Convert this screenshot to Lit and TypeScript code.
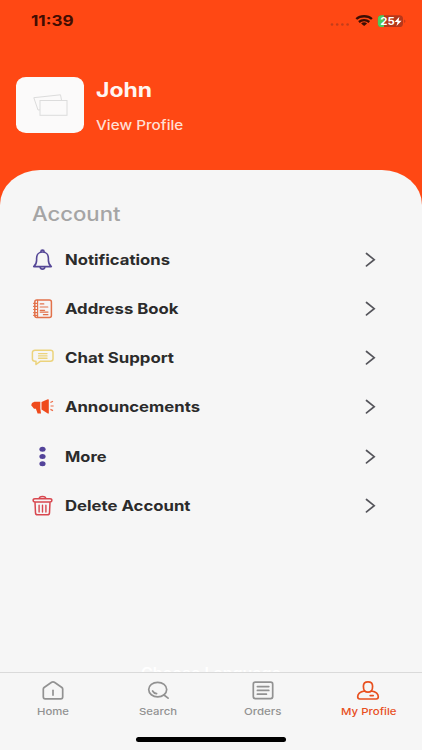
import { LitElement, html, svg, css } from "lit";
import { customElement } from "lit/decorators.js";

const label = (text: string, width: number, cls: string, baseline: number, height: number) => html`
  <svg class="label ${cls}" width=${width} height=${height}>
    <text x="0" y=${baseline} textLength=${width} lengthAdjust="spacingAndGlyphs">${text}</text>
  </svg>`;

const bell = svg`<g fill="none" stroke="#554796" stroke-width="1.6" stroke-linejoin="round" stroke-linecap="round">
  <path d="M2.700 17.600C4.600 16 5.600 14.400 5.600 11.200V9.200C5.600 5.600 8 3 11.500 3s5.900 2.600 5.900 6.200v2c0 3.200 1 4.800 2.900 6.400z"/>
  <path d="M9.900 2.800c0-2.200 3.200-2.200 3.200 0M9.200 18.200c.3 2.600 4.300 2.600 4.600 0"/></g>`;
const book = svg`<g fill="none" stroke="#e2724b" stroke-linecap="round">
  <rect x="3.800" y="2.100" width="16.600" height="17.400" rx="2" stroke-width="1.500"/>
  <path stroke-width="1.200" d="M6.600 2.300v17M2.600 5.300h3.400M2.600 8.400h3.400M2.600 11.500h3.400M2.600 14.600h3.400M2.600 17.300h3M9.200 5.900h3.600M9.200 9h7.600M9.200 12.300h4.400M9.200 14.100h7.800M12.400 16.700h4.500"/></g>`;
const chat = svg`<g fill="none" stroke="#ecd37c" stroke-width="1.500" stroke-linejoin="round" stroke-linecap="round">
  <path d="M4 3.300h15.400a2.600 2.200 0 0 1 2.600 2.200v6.600a2.600 2.200 0 0 1-2.600 2.200H9.200l-4.200 3.200v-3.200H4a2.600 2.200 0 0 1-2.600-2.200V5.500A2.600 2.200 0 0 1 4 3.300z"/>
  <path stroke-width="1.400" d="M7.600 6.600h8.400M7.600 8.900h8.400M7.600 11.200h8.400"/></g>`;
const horn = svg`<g fill="#ef4a1c">
  <path d="M1 7 3.400 5.700h5.900v6.800l.7 5.100H6.600l-1.700-4.900H3L.2 9.200z"/>
  <path d="M10.500 5.900 16.800 3.300c.6-.2 1 .2 1 .7v13c0 .6-.5.9-1 .6l-6.300-4.200z"/>
  <path d="m19.400 6.500 2.600-1.200M19.600 10h3M19.400 13.400l2.600 1.200" fill="none" stroke="#ef6a45" stroke-width="1.200"/></g>`;
const dots = svg`<g fill="#53439a"><ellipse cx="11.500" cy="3.300" rx="3.100" ry="2.500"/><ellipse cx="11.500" cy="10.600" rx="3.100" ry="2.500"/><ellipse cx="11.500" cy="17.800" rx="3.100" ry="2.500"/></g>`;
const trash = svg`<g fill="none" stroke="#d8474f" stroke-linejoin="round" stroke-linecap="round">
  <path stroke-width="1.500" d="M4 3.700h15a1.400 1.200 0 0 1 0 3.200H4a1.400 1.200 0 0 1 0-3.200zM8.300 3.500c0-2.600 6.400-2.600 6.400 0M4 7.200l.5 10.700c.1 1.300.8 1.900 2.100 1.900h9.800c1.300 0 2-.6 2.100-1.900L19 7.200"/>
  <path stroke-width="1.400" d="M8.100 10.200v6.900M11.500 10.200v6.900M14.900 10.200v6.900"/></g>`;

const rows = [
  { text: "Notifications", width: 105, icon: bell },
  { text: "Address Book", width: 113.5, icon: book },
  { text: "Chat Support", width: 109, icon: chat },
  { text: "Announcements", width: 135, icon: horn },
  { text: "More", width: 41.5, icon: dots },
  { text: "Delete Account", width: 125.5, icon: trash },
];

const tabs = [
  { text: "Home", width: 32, icon: svg`<path d="M2.300 9.100c0-.7.2-1.100.8-1.600l7.500-5.200c.9-.6 1.900-.6 2.800 0l7.500 5.200c.6.5.8.9.8 1.600v8c0 1-.8 1.700-1.900 1.700H4.200c-1.100 0-1.900-.7-1.900-1.700z"/><path d="M12 10.300v4.800"/>` },
  { text: "Search", width: 38, icon: svg`<ellipse cx="11.700" cy="9.600" rx="9" ry="7.300"/><path d="m18 15 4.100 3.200M6.600 11c.8 1.500 2.200 2.400 4 2.600"/>` },
  { text: "Orders", width: 37.5, icon: svg`<rect x="2.300" y="2.200" width="19.400" height="16.400" rx="2"/><path d="M6.400 6.600h11.400M6.400 10.400h11.400M6.400 14.200h9"/>` },
  { text: "My Profile", width: 55.5, icon: svg`<path d="M8.600 11C7.700 10 7.400 8 7.400 6.200 7.400 3.600 9.200 1.900 12 1.900s4.600 1.700 4.600 4.300c0 1.800-.3 3.800-1.200 4.800"/><path d="M8.600 11C4.500 11.600 1.700 13.600 1.700 16.800c0 1.500.6 2.200 2.100 2.200h16.400c1.500 0 2.100-.7 2.100-2.200 0-3.200-2.800-5.200-6.900-5.800-1 .9-2 1.200-3.400 1.200S9.600 11.900 8.600 11zM14.200 15.600h3"/>` },
];

@customElement("app-root")
export class AppRoot extends LitElement {
  static styles = css`
    :host {
      display: flex;
      flex-direction: column;
      width: 422px;
      height: 750px;
      overflow: hidden;
      background: #ff4814;
      font-family: Inter, "Liberation Sans", sans-serif;
    }
    svg { display: block; flex: none; overflow: visible; }
    .status {
      display: flex;
      justify-content: space-between;
      height: 32px;
      padding: 11px 17px 0 31px;
      box-sizing: border-box;
    }
    .time { font-size: 14.2px; font-weight: 650; fill: #420d02; }
    .profile { display: flex; gap: 12px; height: 137.5px; padding: 45.3px 0 0 16.3px; box-sizing: border-box; }
    .photo {
      display: grid;
      place-items: center;
      width: 67.8px;
      height: 55.5px;
      border-radius: 10px / 8.5px;
      background: #fbfafa;
    }
    .name { font-size: 19.7px; font-weight: 700; fill: #fff6f1; }
    .view { font-size: 13.2px; font-weight: 450; fill: #ffdfd3; }
    .panel {
      flex: 1;
      min-height: 0;
      display: flex;
      flex-direction: column;
      background: #f6f6f6;
      border-radius: 40px 40px 0 0 / 35px 35px 0 0;
    }
    .content { flex: 1; min-height: 0; display: flex; flex-direction: column; overflow: hidden; padding: 31px 46px 0 31px; }
    .heading { font-size: 19.5px; font-weight: 500; fill: #a5a5a5; margin-left: 0.5px; }
    .list { display: flex; flex-direction: column; padding-top: 10.4px; }
    .row { display: flex; align-items: center; gap: 11px; height: 49.25px; }
    .row .chevron { margin-left: auto; }
    .item { font-size: 14.4px; font-weight: 650; fill: #2b2b2b; }
    .language { font-size: 14.3px; font-weight: 600; fill: #ffffff; margin: auto 0 0 110px; }
    .tabs { display: flex; height: 78px; box-sizing: border-box; padding-right: 1px; border-top: 1px solid #dadada; }
    .tab {
      flex: 1;
      display: flex;
      flex-direction: column;
      align-items: center;
      padding-top: 7px;
      gap: 4px;
      color: #929292;
    }
    .tab.active { color: #e8501f; }
    .tabtext { font-size: 9.6px; font-weight: 500; fill: currentColor; }
    .indicator {
      position: absolute;
      left: 135.5px;
      top: 737.3px;
      width: 150.5px;
      height: 5px;
      border-radius: 3px;
      background: #000;
    }
  `;

  render() {
    return html`
      <div class="status">
        ${label("11:39", 42.5, "time", 15.2, 18)}
        <svg width="76" height="20">
          <g fill="#c23d1a"><circle cx="3" cy="13.500" r="1.300"/><circle cx="8.200" cy="13.500" r="1.300"/><circle cx="13.400" cy="13.500" r="1.300"/><circle cx="18.600" cy="13.500" r="1.300"/></g>
          <g fill="none" stroke="#3b0e04" stroke-width="2.300"><path d="M27.300 8c4-3.700 11.600-3.700 15.600 0M29.900 11c3-2.500 7.400-2.500 10.400 0"/></g>
          <path d="M32.100 12.400c1.600-1.400 4.400-1.400 6 0l-3 2.700z" fill="#3b0e04"/>
          <rect x="48.800" y="4.300" width="25.200" height="11.700" rx="3.600" fill="#b6371a"/>
          <path d="M52.400 4.300H55V16h-2.600a3.600 3.600 0 0 1-3.600-3.600V7.900a3.600 3.600 0 0 1 3.600-3.600z" fill="#4ccb5e"/>
          <path d="M75.300 8.500c1.400.5 1.400 3 0 3.500z" fill="#b6371a"/>
          <text x="51.200" y="14.100" font-size="11" font-weight="700" fill="#fff" textLength="14.500" lengthAdjust="spacingAndGlyphs">25</text>
          <path d="m70.400 5.700-4.800 5.200h2.900l-1 4.200 5.100-5.400h-3z" fill="#fff"/>
        </svg>
      </div>
      <div class="profile">
        <div class="photo">
          <svg width="34" height="22" fill="#fbfafa" stroke="#dcdcdc" stroke-width="1">
            <path d="M.8 3.700 27.500.8l2.500 13.500L5 16z"/>
            <rect x="7" y="6.500" width="27" height="14.800"/>
          </svg>
        </div>
        <div>
          ${label("John", 56, "name", 19.7, 39)}
          ${label("View Profile", 87.3, "view", 13.8, 18)}
        </div>
      </div>
      <div class="panel">
        <div class="content">
          ${label("Account", 88.5, "heading", 20, 24)}
          <div class="list">
            ${rows.map((r) => html`
              <div class="row">
                <svg width="23" height="22">${r.icon}</svg>
                ${label(r.text, r.width, "item", 14.8, 20)}
                <svg class="chevron" width="11" height="16"><path d="m1.500 1.500 7.700 6.200-7.700 6.200" fill="none" stroke="#55555b" stroke-width="1.700" stroke-linecap="round"/></svg>
              </div>`)}
          </div>
          ${label("Choose Language", 140, "language", 11.3, 5)}
        </div>
        <div class="tabs">
          ${tabs.map((t, i) => html`
            <div class="tab ${i === 3 ? "active" : ""}">
              <svg width="24" height="20" fill="none" stroke="currentColor" stroke-width="1.700" stroke-linecap="round" stroke-linejoin="round">${t.icon}</svg>
              ${label(t.text, t.width, "tabtext", 11, 13)}
            </div>`)}
        </div>
      </div>
      <div class="indicator"></div>
    `;
  }
}
